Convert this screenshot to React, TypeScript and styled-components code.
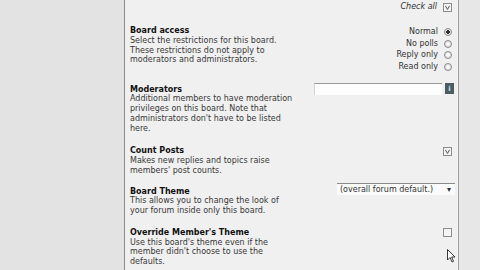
import React from 'react';
import styled, { createGlobalStyle } from 'styled-components';

const GlobalStyle = createGlobalStyle`
  html, body {
    margin: 0;
    padding: 0;
    background: #e4e4e4;
  }
  body {
    font-family: "DejaVu Sans", Verdana, sans-serif;
  }
`;

const Page = styled.div`
  width: 480px;
  height: 270px;
  display: flex;
  overflow: hidden;
`;

const Sidebar = styled.div`
  width: 124px;
  background: #e3e3e3;
  border-right: 1px solid #8c8c8c;
`;

const Panel = styled.div`
  position: relative;
  width: 334px;
  background: #f0f0f0;
  border-right: 1px solid #a0a0a0;
  padding-left: 5px;
  box-sizing: border-box;
  display: flex;
  flex-direction: column;
`;

const Gutter = styled.div`
  flex: 1;
  background: #e7e7e7;
`;

const CheckAllRow = styled.div`
  display: flex;
  justify-content: flex-end;
  align-items: center;
  gap: 6px;
  height: 10px;
  padding-top: 2px;
  padding-right: 6px;
  font-size: 8px;
  line-height: 10px;
  font-style: italic;
  color: #333;
`;

const Row = styled.div<{ $top: number }>`
  display: flex;
  justify-content: space-between;
  align-items: flex-start;
  margin-top: ${(p) => p.$top}px;
  padding-right: 6px;
`;

const Info = styled.div`
  width: 166px;
  font-size: 8px;
  line-height: 9.75px;
  color: #383838;
`;

const Title = styled.div`
  font-weight: bold;
  color: #111;
`;

const Radios = styled.div`
  display: flex;
  flex-direction: column;
  align-items: flex-end;
  gap: 3.5px;
  margin-top: 2px;
`;

const RadioLabel = styled.label`
  display: flex;
  align-items: center;
  gap: 6px;
  font-size: 8px;
  line-height: 8px;
  color: #333;
`;

const Radio = styled.span<{ $on?: boolean }>`
  width: 6px;
  height: 6px;
  border-radius: 50%;
  border: 1px solid #8a8a8a;
  background: radial-gradient(circle, ${(p) => (p.$on ? '#333 0 1.6px' : '#fff 0 1px')}, #e6e6e6 2px);
`;

const Box = styled.span<{ $shift: number }>`
  display: flex;
  align-items: center;
  justify-content: center;
  width: 7px;
  height: 7px;
  margin-top: ${(p) => p.$shift}px;
  border: 1px solid #8c8c8c;
  background: #f4f4f4;
`;

const InputGroup = styled.div`
  display: flex;
  align-items: center;
  gap: 3px;
  margin-right: -2px;
  margin-top: -2px;
`;

const TextInput = styled.div`
  width: 127px;
  height: 11px;
  background: #fdfdfd;
  border-top: 1px solid #9a9a9a;
  border-left: 1px solid #d4d4d4;
`;

const FindButton = styled.div`
  width: 9px;
  height: 11px;
  background: #4c5c63;
  color: #d8e0e4;
  font-size: 7px;
  font-weight: bold;
  display: flex;
  align-items: center;
  justify-content: center;
`;

const Select = styled.div`
  width: 118px;
  height: 12px;
  margin-right: -3px;
  margin-top: -4px;
  background: #fbfbfb;
  border-top: 1px solid #8a8a8a;
  box-sizing: border-box;
  display: flex;
  align-items: center;
  justify-content: space-between;
  padding: 0 4px 0 3px;
  font-size: 8px;
  color: #333;
`;

const Cursor = styled.svg`
  position: absolute;
  left: 322px;
  top: 249px;
`;

function CheckBox({ checked, shift = 0 }: { checked?: boolean; shift?: number }) {
  return (
    <Box $shift={shift}>
      {checked && (
        <svg width="5" height="5" viewBox="0 0 5 5">
          <path d="M0.4 0.8 L2.5 4.4 L4.6 0.8" fill="none" stroke="#444" strokeWidth="0.9" />
        </svg>
      )}
    </Box>
  );
}

export default function App() {
  return (
    <Page>
      <GlobalStyle />
      <Sidebar />
      <Panel>
        <CheckAllRow>
          Check all <CheckBox checked />
        </CheckAllRow>

        <Row $top={14}>
          <Info>
            <Title>Board access</Title>
            Select the restrictions for this board. These restrictions do not apply to
            moderators and administrators.
          </Info>
          <Radios>
            <RadioLabel>Normal <Radio $on /></RadioLabel>
            <RadioLabel>No polls <Radio /></RadioLabel>
            <RadioLabel>Reply only <Radio /></RadioLabel>
            <RadioLabel>Read only <Radio /></RadioLabel>
          </Radios>
        </Row>

        <Row $top={14}>
          <Info>
            <Title>Moderators</Title>
            Additional members to have moderation privileges on this board. Note that
            administrators don't have to be listed here.
          </Info>
          <InputGroup>
            <TextInput />
            <FindButton>i</FindButton>
          </InputGroup>
        </Row>

        <Row $top={13}>
          <Info>
            <Title>Count Posts</Title>
            Makes new replies and topics raise members' post counts.
          </Info>
          <CheckBox checked shift={1} />
        </Row>

        <Row $top={11}>
          <Info>
            <Title>Board Theme</Title>
            This allows you to change the look of your forum inside only this board.
          </Info>
          <Select>
            <span>(overall forum default.)</span>
            <span>▾</span>
          </Select>
        </Row>

        <Row $top={12}>
          <Info>
            <Title>Override Member's Theme</Title>
            Use this board's theme even if the member didn't choose to use the defaults.
          </Info>
          <CheckBox />
        </Row>

        <Cursor width="9" height="14" viewBox="0 0 9 14">
          <path d="M0.5 0.5 L0.5 11 L3 8.5 L5 13 L6.5 12.3 L4.6 8 L8 8 Z" fill="#fff" stroke="#222" strokeWidth="0.9" />
        </Cursor>
      </Panel>
      <Gutter />
    </Page>
  );
}
